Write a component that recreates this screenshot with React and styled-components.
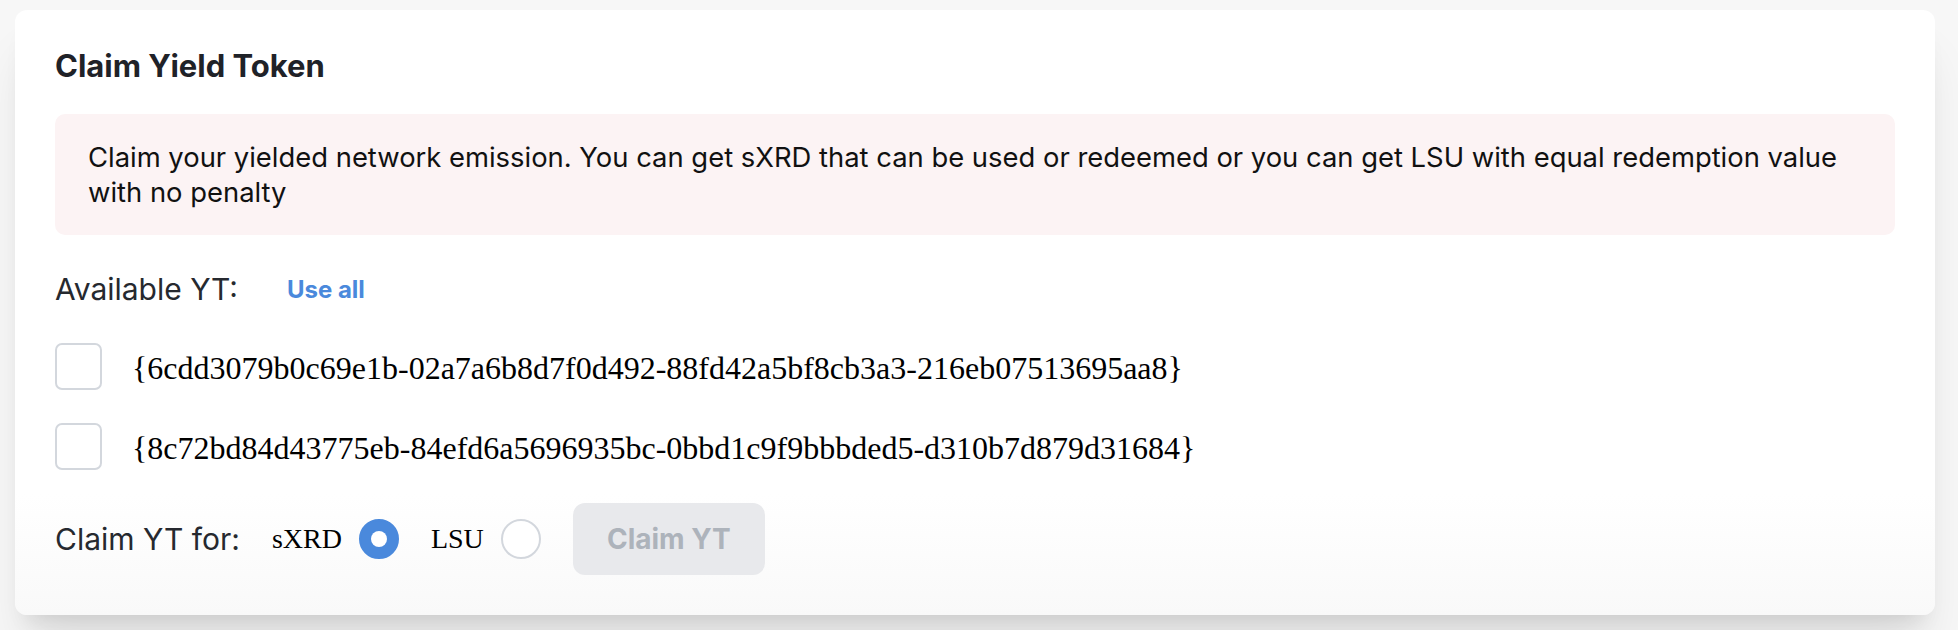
import React, { useState } from 'react'
import styled, { createGlobalStyle } from 'styled-components'

const tokens = [
  '{6cdd3079b0c69e1b-02a7a6b8d7f0d492-88fd42a5bf8cb3a3-216eb07513695aa8}',
  '{8c72bd84d43775eb-84efd6a5696935bc-0bbd1c9f9bbbded5-d310b7d879d31684}',
]

const ClaimYield = () => {

  let [target, setTarget] = useState('sXRD');
  let [picked, setPicked] = useState([]);

  const toggle = (id) => {
    setPicked(picked.includes(id) ? picked.filter(p => p !== id) : [...picked, id])
  }

  return (
    <React.Fragment>
      <GlobalStyle />
      <Page>
        <Card>
          <Title>Claim Yield Token</Title>
          <Notice>
            Claim your yielded network emission. You can get sXRD that can be used or redeemed or you can get LSU with equal redemption value with no penalty
          </Notice>

          <AvailableRow>
            <Label>Available YT:</Label>
            <UseAll onClick={() => setPicked(tokens)}>Use all</UseAll>
          </AvailableRow>

          <TokenList>
            {tokens.map(id => (
              <TokenRow key={id}>
                <Checkbox checked={picked.includes(id)} onClick={() => toggle(id)} />
                <TokenId>{id}</TokenId>
              </TokenRow>
            ))}
          </TokenList>

          <ClaimRow>
            <Label>Claim YT for:</Label>
            <Options>
              {['sXRD', 'LSU'].map(opt => (
                <Option key={opt} onClick={() => setTarget(opt)}>
                  <OptionText>{opt}</OptionText>
                  <Radio checked={target === opt} />
                </Option>
              ))}
            </Options>
            <ClaimButton disabled={picked.length === 0}>Claim YT</ClaimButton>
          </ClaimRow>
        </Card>
      </Page>
    </React.Fragment>
  )
}

const GlobalStyle = createGlobalStyle`
  body {
    margin: 0;
    background: #f7f7f7;
    font-family: Inter, "Noto Sans", sans-serif;
  }
`

const Page = styled.div`
  padding: 10px 23px 0 15px;
  height: 620px;
  overflow: hidden;
`

const Card = styled.div`
  background: linear-gradient(to bottom, #ffffff 80%, #f9f9f9 100%);
  border-radius: 12px;
  padding: 38px 40px 40px 40px;
  box-shadow: 0 40px 50px -10px rgba(0, 0, 0, 0.1), 0 16px 20px -12px rgba(0, 0, 0, 0.1);
`

const Title = styled.h2`
  margin: 0;
  font-size: 31px;
  line-height: 36px;
  font-weight: 700;
  color: #1f2228;
`

const Notice = styled.div`
  margin-top: 30px;
  background-color: #fcf3f4;
  border-radius: 10px;
  padding: 26px 33px;
  font-size: 27.4px;
  line-height: 34.6px;
  color: #111111;
`

const AvailableRow = styled.div`
  margin-top: 36px;
  display: flex;
  align-items: center;
  gap: 49px;
`

const Label = styled.span`
  font-size: 30px;
  line-height: 36px;
  color: #26292f;
`

const UseAll = styled.button`
  border: none;
  background: none;
  padding: 0;
  font-family: inherit;
  font-size: 24px;
  font-weight: 700;
  color: #4a89dc;
  cursor: pointer;
`

const TokenList = styled.div`
  margin-top: 36px;
  display: flex;
  flex-direction: column;
  gap: 33px;
`

const TokenRow = styled.label`
  display: flex;
  align-items: center;
  gap: 30px;
  cursor: pointer;
`

const Checkbox = styled.span`
  width: 47px;
  height: 47px;
  box-sizing: border-box;
  border: 2px solid ${props => props.checked ? '#4a89dc' : '#d3d7dd'};
  background: ${props => props.checked ? '#4a89dc' : '#fff'};
  border-radius: 7px;
  flex-shrink: 0;
`

const TokenId = styled.span`
  font-family: "Liberation Serif", serif;
  font-size: 32px;
  line-height: 36px;
  color: #000;
  margin-top: 3px;
`

const ClaimRow = styled.div`
  margin-top: 33px;
  display: flex;
  align-items: center;
`

const Options = styled.div`
  display: flex;
  align-items: center;
  gap: 32px;
  margin-left: 32px;
`

const Option = styled.div`
  display: flex;
  align-items: center;
  gap: 17px;
  cursor: pointer;
`

const OptionText = styled.span`
  font-family: "Liberation Serif", serif;
  font-size: 28px;
  color: #000;
`

const Radio = styled.span`
  width: 40px;
  height: 40px;
  box-sizing: border-box;
  border-radius: 50%;
  border: 2px solid ${props => props.checked ? '#4a89dc' : '#d3d7dd'};
  background: ${props => props.checked ? '#4a89dc' : '#fff'};
  display: flex;
  align-items: center;
  justify-content: center;

  &::after {
    content: '';
    width: 16px;
    height: 16px;
    border-radius: 50%;
    background: #fff;
    display: ${props => props.checked ? 'block' : 'none'};
  }
`

const ClaimButton = styled.button`
  margin-left: 32px;
  width: 192px;
  height: 72px;
  border: none;
  border-radius: 12px;
  background-color: #e8e9ec;
  color: #adb3bb;
  font-family: inherit;
  font-size: 28px;
  font-weight: 700;
  &:disabled {
    cursor: not-allowed;
  }
`

export default ClaimYield
